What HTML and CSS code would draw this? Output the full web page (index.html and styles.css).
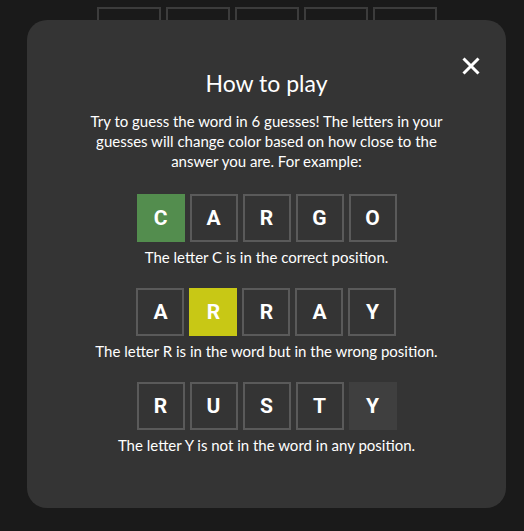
FILE: index.html
```html
<!DOCTYPE html>
<html lang="en">
<head>
<meta charset="utf-8">
<title>How to play</title>
<link rel="stylesheet" href="styles.css">
</head>
<body>
<div class="board">
  <div class="cell"></div>
  <div class="cell"></div>
  <div class="cell"></div>
  <div class="cell"></div>
  <div class="cell"></div>
</div>
<div class="modal">
  <button class="close" aria-label="Close">
    <svg width="18" height="18" viewBox="0 0 18 18"><path d="M1.5 1.5 L16.5 16.5 M16.5 1.5 L1.5 16.5" stroke="#fff" stroke-width="3" stroke-linecap="butt"/></svg>
  </button>
  <h1 class="title">How to play</h1>
  <p class="intro">Try to guess the word in 6 guesses! The letters in your<br>guesses will change color based on how close to the<br>answer you are. For example:</p>
  <div class="example">
    <div class="row">
      <div class="tile correct">C</div>
      <div class="tile">A</div>
      <div class="tile">R</div>
      <div class="tile">G</div>
      <div class="tile">O</div>
    </div>
    <p class="caption">The letter C is in the correct position.</p>
  </div>
  <div class="example">
    <div class="row">
      <div class="tile">A</div>
      <div class="tile present">R</div>
      <div class="tile">R</div>
      <div class="tile">A</div>
      <div class="tile">Y</div>
    </div>
    <p class="caption">The letter R is in the word but in the wrong position.</p>
  </div>
  <div class="example">
    <div class="row">
      <div class="tile">R</div>
      <div class="tile">U</div>
      <div class="tile">S</div>
      <div class="tile">T</div>
      <div class="tile absent">Y</div>
    </div>
    <p class="caption">The letter Y is not in the word in any position.</p>
  </div>
</div>
</body>
</html>
```

FILE: styles.css
```css
html, body {
  margin: 0;
  padding: 0;
  background: #1a1a1a;
  height: 100%;
}
body {
  font-family: Lato, "Liberation Sans", sans-serif;
  color: #ffffff;
  position: relative;
  overflow: hidden;
}
.board {
  display: flex;
  gap: 5px;
  padding: 7px 0 0 97px;
}
.cell {
  width: 60px;
  height: 60px;
  border: 2px solid #3c3c3c;
}
.modal {
  position: absolute;
  left: 27px;
  top: 20px;
  width: 479px;
  height: 488px;
  box-sizing: border-box;
  background: #343434;
  border-radius: 20px;
  display: flex;
  flex-direction: column;
  align-items: center;
  padding-top: 48px;
}
.close {
  position: absolute;
  top: 28px;
  left: 426px;
  width: 36px;
  height: 36px;
  padding: 0;
  border: 0;
  background: transparent;
  display: flex;
  align-items: center;
  justify-content: center;
  cursor: pointer;
}
.close svg { display: block; }
.title {
  margin: 0;
  font-size: 23px;
  line-height: 30px;
  font-weight: 400;
}
.intro {
  margin: 13px 0 0;
  font-size: 15px;
  line-height: 20px;
  text-align: center;
}
.example {
  display: flex;
  flex-direction: column;
  align-items: center;
}
.example:first-of-type { margin-top: 23px; }
.example + .example { margin-top: 21px; }
.row {
  display: flex;
  gap: 5px;
}
.tile {
  width: 44px;
  height: 44px;
  border: 2px solid #5a5a5a;
  display: flex;
  align-items: center;
  justify-content: center;
  font-family: Roboto, "Liberation Sans", sans-serif;
  font-weight: 700;
  font-size: 21px;
  color: #ffffff;
}
.tile.correct { background: #538d4e; border-color: #538d4e; }
.tile.present { background: #c8c815; border-color: #c8c815; }
.tile.absent { background: #3f3f3f; border-color: #3f3f3f; }
.caption {
  margin: 5px 0 0;
  font-size: 15px;
  line-height: 20px;
}
```
